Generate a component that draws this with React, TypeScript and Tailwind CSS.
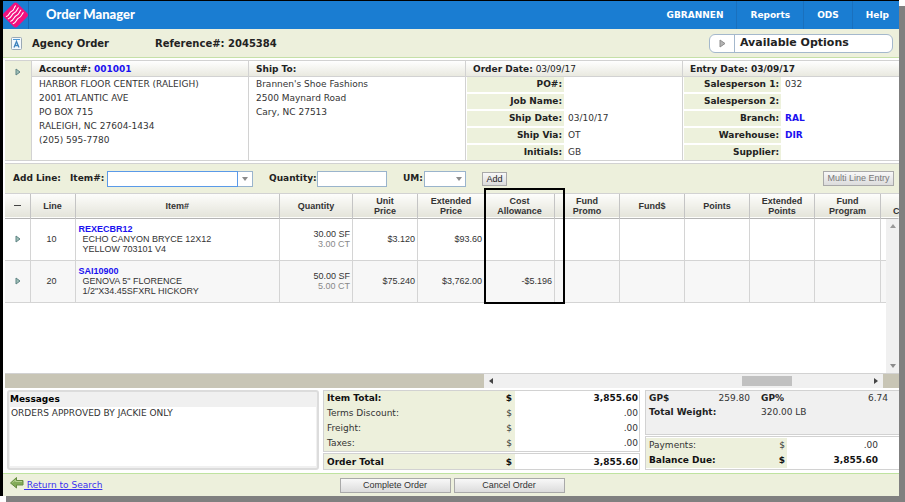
import React from 'react';

const nav = ['GBRANNEN', 'Reports', 'ODS', 'Help'];

const address = [
  'HARBOR FLOOR CENTER (RALEIGH)',
  '2001 ATLANTIC AVE',
  'PO BOX 715',
  'RALEIGH, NC 27604-1434',
  '(205) 595-7780',
];

const shipTo = ["Brannen's Shoe Fashions", '2500 Maynard Road', 'Cary, NC 27513'];

interface Field {
  label: string;
  value?: string;
  link?: boolean;
}

const orderFields: Field[] = [
  { label: 'PO#:' },
  { label: 'Job Name:' },
  { label: 'Ship Date:', value: '03/10/17' },
  { label: 'Ship Via:', value: 'OT' },
  { label: 'Initials:', value: 'GB' },
];

const entryFields: Field[] = [
  { label: 'Salesperson 1:', value: '032' },
  { label: 'Salesperson 2:' },
  { label: 'Branch:', value: 'RAL', link: true },
  { label: 'Warehouse:', value: 'DIR', link: true },
  { label: 'Supplier:' },
];

const columns = [
  { lines: ['Line'], width: 'w-[45px]' },
  { lines: ['Item#'], width: '' },
  { lines: ['Quantity'], width: 'w-[73px]' },
  { lines: ['Unit', 'Price'], width: 'w-[65px]' },
  { lines: ['Extended', 'Price'], width: 'w-[67px]' },
  { lines: ['Cost', 'Allowance'], width: 'w-[70px]' },
  { lines: ['Fund', 'Promo'], width: 'w-[65px]' },
  { lines: ['Fund$'], width: 'w-[65px]' },
  { lines: ['Points'], width: 'w-[65px]' },
  { lines: ['Extended', 'Points'], width: 'w-[65px]' },
  { lines: ['Fund', 'Program'], width: 'w-[66px]' },
];

const rows = [
  {
    line: 10,
    item: 'REXECBR12',
    desc: ['ECHO CANYON BRYCE 12X12', 'YELLOW 703101 V4'],
    qty: ['30.00 SF', '3.00 CT'],
    unit: '$3.120',
    ext: '$93.60',
    allowance: '',
  },
  {
    line: 20,
    item: 'SAI10900',
    desc: ['GENOVA 5" FLORENCE', '1/2"X34.45SFXRL HICKORY'],
    qty: ['50.00 SF', '5.00 CT'],
    unit: '$75.240',
    ext: '$3,762.00',
    allowance: '-$5.196',
  },
];

const totals = [
  { label: 'Item Total:', value: '3,855.60', bold: true },
  { label: 'Terms Discount:', value: '.00' },
  { label: 'Freight:', value: '.00' },
  { label: 'Taxes:', value: '.00' },
];

const Logo = () => (
  <svg width="26" height="26" viewBox="0 0 26 26" aria-hidden="true">
    <rect x="3" y="3" width="20" height="20" rx="3" fill="#f2107e" transform="rotate(45 13 13)" />
    <g fill="none" stroke="#fff" strokeWidth="1.1" strokeLinecap="round">
      <path d="M3.500 14.500C7 13.500 6 10 9 9S11 5.500 13 3.500" />
      <path d="M5.500 17C9 16 8.500 12.500 11.500 11S14 8 16 5.500" />
      <path d="M8 19.500C11.500 18.500 11 15 14 13.500S16.500 10.500 18.500 8" />
      <path d="M10.500 22C14 21 13.500 17.500 16.500 16S19 13 21 10.500" />
    </g>
  </svg>
);

const ExpandIcon = () => (
  <svg width="6" height="8" viewBox="0 0 6 8" aria-hidden="true">
    <path d="M1 1v6l4-3z" fill="#9fc0b8" stroke="#5f8484" />
  </svg>
);

const DownIcon = () => (
  <svg width="6" height="4" viewBox="0 0 6 4" aria-hidden="true">
    <path d="M0 0h6L3 4z" fill="#8b8b8b" />
  </svg>
);

const FieldList = ({ fields }: { fields: Field[] }) => (
  <dl className="flex flex-col gap-[2px] pl-px">
    {fields.map((f) => (
      <div key={f.label} className="flex h-[15px] leading-[15px]">
        <dt className="w-[97px] bg-[#edf1dc] pr-[2px] text-right font-bold text-[#222]">{f.label}</dt>
        <dd className="pl-1">
          {f.link ? (
            <a href="#" className="font-bold text-[#1a10f0]">{f.value}</a>
          ) : (
            f.value
          )}
        </dd>
      </div>
    ))}
  </dl>
);

const InfoPanel = ({ title, children }: { title: React.ReactNode; children: React.ReactNode }) => (
  <section className="flex-1 border-l border-[#d2d2d2]">
    <h2 className="h-4 border-b border-[#d2d2d2] bg-gradient-to-b from-white to-[#e9e9e0] pl-[7px] leading-[16px] text-[#222]">
      {title}
    </h2>
    {children}
  </section>
);

const buttonStyle =
  'border border-[#a9a9a9] bg-gradient-to-b from-[#f8f8f8] to-[#dcdcdc] font-["Liberation_Sans",sans-serif]';

const App: React.FC = () => {
  return (
    <div className="bg-white pr-[6px] pb-[6px] font-['DejaVu_Sans',sans-serif] text-[9px] text-[#333]">
      <div className="border-t border-l-[3px] border-black bg-white shadow-[6px_6px_0_#808080]">
        {/* Top bar */}
        <header className="flex h-7 items-center bg-[#1a7dd2] text-white">
          <div className="flex h-7 w-[26px] items-center border-r border-[#1567b4]">
            <Logo />
          </div>
          <h1 className="flex-1 pl-[17px] font-['Lato',sans-serif] text-[13px] font-black">Order Manager</h1>
          <nav className="flex h-7 leading-[28px] font-bold">
            {nav.map((n) => (
              <a key={n} href="#" className="border-r border-[#1a70bd] px-[13px] last:border-0 last:pr-[10px]">
                {n}
              </a>
            ))}
          </nav>
        </header>

        {/* Title bar */}
        <div className="flex h-[29px] items-center border-b border-[#c5e0a8] bg-[#edf0dc] pr-[6px] pl-2 text-[10px] font-bold text-[#222]">
          <svg width="12" height="13" viewBox="0 0 12 13" aria-hidden="true">
            <rect x="0.5" y="0.5" width="10" height="12" rx="1" fill="#f4f9fd" stroke="#9aa9b5" />
            <path d="M2 2.500h7" stroke="#4d9bd6" />
            <path d="M3 10.500l2.500-6 2.500 6M4 8.500h3" fill="none" stroke="#3e83bd" strokeWidth="1.3" />
          </svg>
          <span className="w-[122px] pl-[9px]">Agency Order</span>
          <span className="flex-1 pl-[10px]">Reference#: 2045384</span>
          <button className="flex h-[19px] w-[184px] items-center rounded-[6px] border border-[#a4b8cc] bg-white text-left text-[11px] font-bold">
            <span className="flex h-full w-[25px] items-center justify-center border-r border-[#a4b8cc]">
              <svg width="7" height="9" viewBox="0 0 7 9" aria-hidden="true">
                <path d="M1 1v7l5-3.500z" fill="#b5b5b5" stroke="#8c8c8c" />
              </svg>
            </span>
            <span className="pl-[5px]">Available Options</span>
          </button>
        </div>

        {/* Account and order details */}
        <div className="pt-[2px] pl-[2px]">
          <div className="flex h-[101px] border-t border-b border-[#d2d2d2]">
            <div className="w-[26px] bg-[#edf0dc] pt-[6px] pl-[10px]">
              <button aria-label="Expand details"><ExpandIcon /></button>
            </div>
            <InfoPanel title={<><b>Account#:</b> <a href="#" className="font-bold text-[#1a10f0]">001001</a></>}>
              <address className="pl-[7px] leading-[14px] not-italic">
                {address.map((l) => <p key={l}>{l}</p>)}
              </address>
            </InfoPanel>
            <InfoPanel title={<b>Ship To:</b>}>
              <address className="pl-[7px] leading-[14px] not-italic">
                {shipTo.map((l) => <p key={l}>{l}</p>)}
              </address>
            </InfoPanel>
            <InfoPanel title={<><b>Order Date:</b> 03/09/17</>}>
              <FieldList fields={orderFields} />
            </InfoPanel>
            <InfoPanel title={<b>Entry Date: 03/09/17</b>}>
              <FieldList fields={entryFields} />
            </InfoPanel>
          </div>
        </div>

        {/* Add line form */}
        <div className="pt-[2px] pl-[2px]">
          <form className="flex h-[30px] items-center border-t border-[#d2d2d2] bg-[#edf0dc] pr-[5px] pl-2 font-bold text-[#222]">
            <span className="w-[57px]">Add Line:</span>
            <label htmlFor="item" className="w-[37px]">Item#:</label>
            <input id="item" autoFocus className="h-4 w-[131px] border border-[#5a9ae8] bg-white px-1 font-normal outline-none" />
            <button type="button" aria-label="Choose item" className="mr-4 flex h-4 w-[15px] items-center justify-center border border-l-0 border-[#9ab4cc] bg-white">
              <DownIcon />
            </button>
            <label htmlFor="qty" className="w-[48px]">Quantity:</label>
            <input id="qty" className="mr-4 h-4 w-[70px] border border-[#9ab4cc] bg-white px-1 font-normal" />
            <label htmlFor="um" className="w-[21px]">UM:</label>
            <span className="relative mr-4 h-4 w-[42px]">
              <select id="um" className="block h-4 w-full appearance-none border border-[#9ab4cc] bg-white" />
              <span className="pointer-events-none absolute top-[6px] right-1"><DownIcon /></span>
            </span>
            <button type="button" className={`${buttonStyle} h-[14px] w-[25px] font-normal leading-[12px]`}>Add</button>
            <button type="button" className={`${buttonStyle} ml-auto h-[15px] w-[71px] font-normal leading-[13px] text-[#777]`}>
              Multi Line Entry
            </button>
          </form>
        </div>

        {/* Order lines */}
        <div className="relative ml-[2px] h-[180px] border-t border-[#d2d2d2] font-['Liberation_Sans',sans-serif]">
          <table className="w-full table-fixed border-collapse leading-[10px]">
            <thead>
              <tr className="h-[24px] border-b border-[#b4b4b4] bg-gradient-to-b from-[#fdfdfb] to-[#e4e4da] text-[#333]">
                <th className="w-[25px] border-r border-[#c4c4c4] p-0">
                  <button aria-label="Collapse all" className="mx-auto block h-px w-[7px] bg-[#444]" />
                </th>
                {columns.map((c) => (
                  <th key={c.lines.join(' ')} className={`${c.width} border-r border-[#c4c4c4] p-0`}>
                    {c.lines.map((l) => <div key={l}>{l}</div>)}
                  </th>
                ))}
                <th className="w-[18px] overflow-hidden p-0 pt-[10px] pl-[12px] text-left">C</th>
              </tr>
            </thead>
            <tbody>
              {rows.map((r) => (
                <tr key={r.line} className="h-[42px] border-b border-[#d4d4d4] even:bg-[#f7f7f7] [&>td]:border-r [&>td]:border-[#d4d4d4] [&>td]:p-0 [&>td]:pr-[2px]">
                  <td>
                    <button aria-label={`Expand line ${r.line}`} className="ml-[10px] block"><ExpandIcon /></button>
                  </td>
                  <td className="text-center">{r.line}</td>
                  <td>
                    <a href="#" className="ml-[3px] font-bold text-[#1a10f0]">{r.item}</a>
                    {r.desc.map((d) => <div key={d} className="pl-[7px]">{d}</div>)}
                  </td>
                  <td className="text-right">
                    {r.qty[0]}
                    <div className="text-[#888]">{r.qty[1]}</div>
                  </td>
                  <td className="text-right">{r.unit}</td>
                  <td className="text-right">{r.ext}</td>
                  <td className="text-right">{r.allowance}</td>
                  <td /><td /><td /><td /><td /><td />
                </tr>
              ))}
            </tbody>
          </table>

          {/* vertical scrollbar */}
          <div className="absolute top-[25px] right-0 bottom-0 flex w-[13px] flex-col items-center justify-between bg-[#f0f0f0] py-[5px]">
            <svg width="6" height="4" viewBox="0 0 6 4" aria-hidden="true"><path d="M0 4h6L3 0z" fill="#999" /></svg>
            <DownIcon />
          </div>

          {/* highlighted column */}
          <div className="pointer-events-none absolute -top-[6px] right-[334px] h-[116px] w-[81px] border-2 border-black" />
        </div>

        {/* horizontal scrollbar */}
        <div className="ml-[2px] flex h-[15px] border-t border-[#d2d2d2] bg-[#c8c5b5]">
          <div className="ml-auto flex w-[399px] items-center bg-[#f0f0f0] px-[5px]">
            <svg width="4" height="6" viewBox="0 0 4 6" aria-hidden="true"><path d="M4 0v6L0 3z" fill="#444" /></svg>
            <span className="mr-[82px] ml-auto h-[10px] w-[50px] bg-[#c1c1c1]" />
            <svg width="4" height="6" viewBox="0 0 4 6" aria-hidden="true"><path d="M0 0v6l4-3z" fill="#444" /></svg>
          </div>
          <div className="w-4" />
        </div>

        {/* Messages and totals */}
        <div className="flex h-[85px] pt-[2px] pb-[3px] pl-1">
          <section className="mr-1 flex flex-1 flex-col rounded-[3px] border-2 border-[#dcdcdc] bg-[#f0f0f0] px-px pb-[2px]">
            <h2 className="h-[15px] leading-[15px] font-bold text-black">Messages</h2>
            <p className="flex-1 bg-white pl-px leading-[12px]">ORDERS APPROVED BY JACKIE ONLY</p>
          </section>

          <section className="mr-[5px] w-[317px]">
            <dl className="border border-[#d2d2d2]">
              {totals.map((t) => (
                <div key={t.label} className={`flex h-[15px] leading-[15px] ${t.bold ? 'font-bold text-[#111]' : ''}`}>
                  <dt className="flex w-[191px] justify-between bg-[#edf0dc] pr-[3px] pl-[3px]">
                    <span>{t.label}</span>
                    <span>$</span>
                  </dt>
                  <dd className="flex-1 pr-px text-right">{t.value}</dd>
                </div>
              ))}
            </dl>
            <dl className="mt-px flex h-[17px] border border-[#d2d2d2] leading-[16px] font-bold text-[#111]">
              <dt className="flex w-[191px] justify-between bg-[#edf0dc] pr-[3px] pl-[3px]">
                <span>Order Total</span>
                <span>$</span>
              </dt>
              <dd className="flex-1 pr-px text-right">3,855.60</dd>
            </dl>
          </section>

          <section className="w-[254px]">
            <div className="h-[45px] border border-r-0 border-[#d2d2d2] bg-[#f0f0f0] pl-[3px] leading-[14px]">
              <div className="flex">
                <b className="w-[52px] text-[#222]">GP$</b>
                <span className="w-[49px] text-right">259.80</span>
                <b className="w-[47px] pl-[11px] text-[#222]">GP%</b>
                <span className="flex-1 pr-[11px] text-right">6.74</span>
              </div>
              <div className="flex">
                <b className="w-[112px] text-[#222]">Total Weight:</b>
                <span>320.00 LB</span>
              </div>
            </div>
            <dl className="mt-px border border-r-0 border-[#d2d2d2] py-px leading-[15px]">
              <div className="flex">
                <dt className="flex w-[141px] justify-between bg-[#edf0dc] pr-[2px] pl-[3px]">
                  <span>Payments:</span>
                  <span>$</span>
                </dt>
                <dd className="flex-1 pr-[21px] text-right">.00</dd>
              </div>
              <div className="flex font-bold text-[#111]">
                <dt className="flex w-[141px] justify-between bg-[#edf0dc] pr-[2px] pl-[3px]">
                  <span>Balance Due:</span>
                  <span>$</span>
                </dt>
                <dd className="flex-1 pr-[21px] text-right">3,855.60</dd>
              </div>
            </dl>
          </section>
        </div>

        {/* Footer */}
        <footer className="flex h-[23px] items-center border-t border-[#bfe3a0] bg-[#edf0dc] pr-[5px] pl-[7px]">
          <a href="#" className="flex flex-1 items-start text-[#3a30f0] underline">
            <svg width="14" height="12" viewBox="0 0 14 12" aria-hidden="true">
              <path d="M0.500 6L6.500 0.500v3h6.500v4.500H6.500v3z" fill="#83ab58" stroke="#678c42" />
              <path d="M2.500 5.500L5.500 3v1.500h6.500" fill="none" stroke="#b4d08f" />
            </svg>
            <span className="pt-[2px] whitespace-pre"> Return to Search</span>
          </a>
          <button className={`${buttonStyle} mr-[3px] h-[15px] w-[111px] leading-[13px]`}>Complete Order</button>
          <button className={`${buttonStyle} h-[15px] w-[111px] leading-[13px]`}>Cancel Order</button>
          <span className="flex-1" />
        </footer>
      </div>
    </div>
  );
};

export default App;
